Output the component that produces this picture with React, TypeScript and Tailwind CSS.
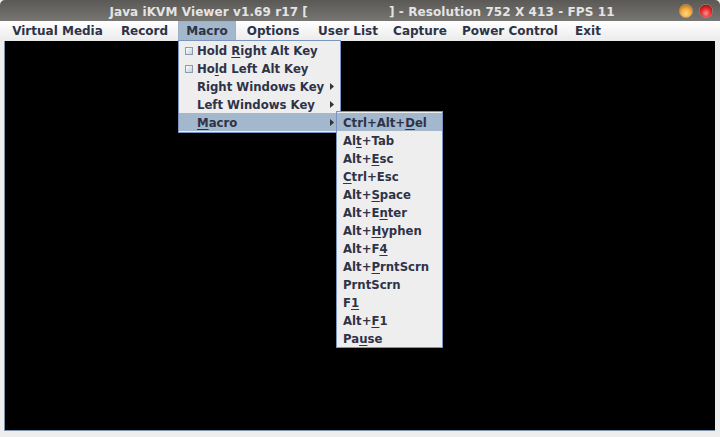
import React from 'react';

const font = { fontFamily: '"DejaVu Sans", sans-serif' };

const topMenus = [
    {label: 'Virtual Media', cls: 'w-[107px]'},
    {label: 'Record', cls: 'w-[67px]'},
    {label: 'Macro', cls: 'w-[58px] bg-[#a3b8cc] border border-[#9eb1c6]'},
    {label: 'Options', cls: 'w-[74px]'},
    {label: 'User List', cls: 'w-[76px]'},
    {label: 'Capture', cls: 'w-[68px]'},
    {label: 'Power Control', cls: 'w-[112px]'},
    {label: 'Exit', cls: 'w-[44px]'},
];

// pre / underlined letter / post
const macroItems: [string, string, string][] = [
    ['Ctrl+Alt+', 'D', 'el'],
    ['Al', 't', '+Tab'],
    ['Alt+', 'E', 'sc'],
    ['', 'C', 'trl+Esc'],
    ['Alt+', 'S', 'pace'],
    ['Alt+E', 'n', 'ter'],
    ['Alt+', 'H', 'yphen'],
    ['Alt+F', '4', ''],
    ['Alt+', 'P', 'rntScrn'],
    ['PrntScrn', '', ''],
    ['F', '1', ''],
    ['Alt+', 'F', '1'],
    ['Pa', 'u', 'se'],
];

function Label({parts}: {parts: [string, string, string]}) {
    return (
        <span>
            {parts[0]}
            <span className="underline underline-offset-2">{parts[1]}</span>
            {parts[2]}
        </span>
    );
}

function Check() {
    return (
        <span className="w-[8px] h-[8px] -mt-[2px] border border-[#8a9cb0] bg-gradient-to-br from-[#ffffff] to-[#c5d0dc] shrink-0"/>
    );
}

function Arrow() {
    return (
        <svg width="4" height="7" viewBox="0 0 4 7" className="absolute right-[6px] top-[6px]">
            <polygon points="0,0 4,3.5 0,7" fill="#333333"/>
        </svg>
    );
}

function Row({children, active}: {children: React.ReactNode; active?: boolean}) {
    return (
        <div className={`relative flex items-center h-[18px] pt-[3px] text-[11.7px] ${active ? 'bg-[#a3b8cc]' : ''}`}>
            {children}
        </div>
    );
}

function Ball({id, light, mid, dark}: {id: string; light: string; mid: string; dark: string}) {
    return (
        <svg width="14" height="14" viewBox="0 0 14 14">
            <defs>
                <radialGradient id={id} cx="50%" cy="68%" r="60%">
                    <stop offset="0%" stopColor={light}/>
                    <stop offset="60%" stopColor={mid}/>
                    <stop offset="100%" stopColor={dark}/>
                </radialGradient>
            </defs>
            <circle cx="7" cy="7" r="6.7" fill={`url(#${id})`} stroke="#a09a92" strokeWidth="0.6"/>
        </svg>
    );
}

export default function App() {
    return (
        <div className="relative w-[720px] h-[437px] overflow-hidden bg-[#eeeeee] text-[12px] font-bold text-[#2e3348]" style={font}>
            {/* title bar */}
            <div className="relative flex items-center justify-center h-[21px] pt-[2px] rounded-t-[5px] bg-gradient-to-b from-[#5a5955] to-[#787672] text-[#e4e4e4] whitespace-pre">
                <span className="pl-[4px] tracking-[0.09px]">Java iKVM Viewer v1.69 r17 [                   ] - Resolution 752 X 413 - FPS 11</span>
                <div className="absolute right-[7px] top-[4px] flex gap-[6px]">
                    <Ball id="ball-min" light="#ffd98a" mid="#f7ab3c" dark="#c97f1c"/>
                    <Ball id="ball-close" light="#ff8f8f" mid="#e62e2e" dark="#a81414"/>
                </div>
            </div>

            {/* menu bar */}
            <div className="flex items-stretch h-[20px] pl-[4px] bg-gradient-to-b from-[#ffffff] to-[#ebebeb]">
                {topMenus.map(m => (
                    <div key={m.label} className={`flex items-center justify-center ${m.cls}`}>{m.label}</div>
                ))}
            </div>

            {/* remote screen */}
            <div className="mx-[4px] w-[711px] h-[390px] bg-black border-b border-l border-[#7f93a8]"/>

            {/* Macro dropdown */}
            <div className="absolute left-[178px] top-[40px] w-[163px] h-[93px] bg-[#eeeeee] border border-[#7a96c0]">
                <Row><span className="ml-[6px] mr-[4px] flex"><Check/></span><Label parts={['Hold ', 'R', 'ight Alt Key']}/></Row>
                <Row><span className="ml-[6px] mr-[4px] flex"><Check/></span><Label parts={['Ho', 'l', 'd Left Alt Key']}/></Row>
                <Row><span className="ml-[18px]">Right Windows Key</span><Arrow/></Row>
                <Row><span className="ml-[18px]">Left Windows Key</span><Arrow/></Row>
                <Row active><span className="ml-[18px]"><Label parts={['', 'M', 'acro']}/></span><Arrow/></Row>
            </div>

            {/* Macro submenu */}
            <div className="absolute left-[336px] top-[111px] w-[107px] h-[237px] bg-[#eeeeee] border border-[#7a96c0] pt-[1px]">
                {macroItems.map((parts, i) => (
                    <Row key={parts.join('')} active={i === 0}>
                        <span className="ml-[6px]"><Label parts={parts}/></span>
                    </Row>
                ))}
            </div>
        </div>
    );
}
